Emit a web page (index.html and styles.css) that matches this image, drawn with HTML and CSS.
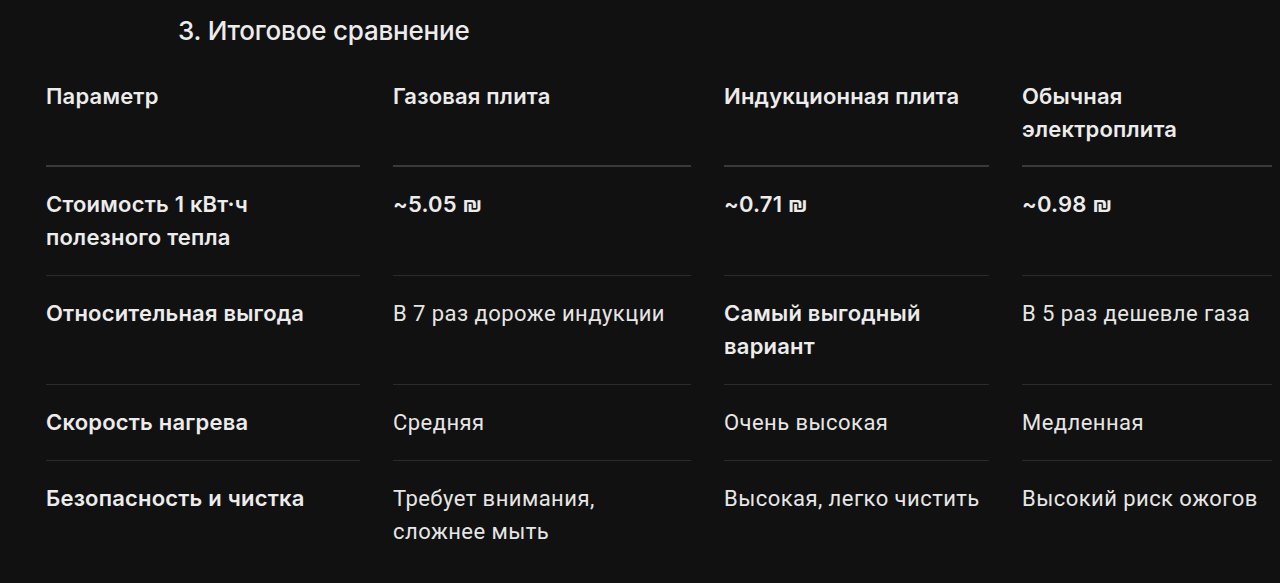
FILE: index.html
```html
<!DOCTYPE html>
<html lang="ru">
<head>
<meta charset="utf-8">
<title>Итоговое сравнение</title>
<link rel="stylesheet" href="styles.css">
</head>
<body>
<h3 class="title">3. Итоговое сравнение</h3>
<div class="table">
  <div class="row head">
    <div class="cell strong">Параметр</div>
    <div class="cell strong">Газовая плита</div>
    <div class="cell strong">Индукционная плита</div>
    <div class="cell strong">Обычная электроплита</div>
  </div>
  <div class="row">
    <div class="cell strong">Стоимость 1 кВт·ч полезного тепла</div>
    <div class="cell strong">~5.05 ₪</div>
    <div class="cell strong">~0.71 ₪</div>
    <div class="cell strong">~0.98 ₪</div>
  </div>
  <div class="row">
    <div class="cell strong">Относительная выгода</div>
    <div class="cell">В 7 раз дороже индукции</div>
    <div class="cell strong">Самый выгодный вариант</div>
    <div class="cell">В 5 раз дешевле газа</div>
  </div>
  <div class="row">
    <div class="cell strong">Скорость нагрева</div>
    <div class="cell">Средняя</div>
    <div class="cell">Очень высокая</div>
    <div class="cell">Медленная</div>
  </div>
  <div class="row last">
    <div class="cell strong">Безопасность и чистка</div>
    <div class="cell">Требует внимания, сложнее мыть</div>
    <div class="cell">Высокая, легко чистить</div>
    <div class="cell">Высокий риск ожогов</div>
  </div>
</div>
</body>
</html>
```
FILE: styles.css
```css
html, body {
  margin: 0;
  padding: 0;
  background: #111111;
  color: #e6e6e6;
  font-family: Roboto, "Liberation Sans", sans-serif;
}

.title {
  margin: 15px 0 0 0;
  padding-left: 178px;
  font-family: Inter, "Open Sans", sans-serif;
  font-weight: 500;
  font-size: 26px;
  line-height: 32px;
  letter-spacing: -0.2px;
  color: #ececec;
}

.table {
  margin-top: 12px;
  padding-left: 46px;
}

.row {
  display: grid;
  grid-template-columns: 314px 298px 265px 250px;
  column-gap: 33px;
}

.cell {
  padding: 21px 0 21px 0;
  font-size: 22px;
  line-height: 33px;
  letter-spacing: 0.45px;
  border-bottom: 1px solid #2b2b2b;
}

.head .cell {
  padding-bottom: 19px;
  border-bottom: 2px solid #3a3a3a;
}

.last .cell {
  border-bottom: none;
}

.strong {
  font-family: Inter, "Open Sans", sans-serif;
  font-weight: 600;
  font-size: 22px;
  letter-spacing: 0.2px;
  color: #ececec;
}
```
